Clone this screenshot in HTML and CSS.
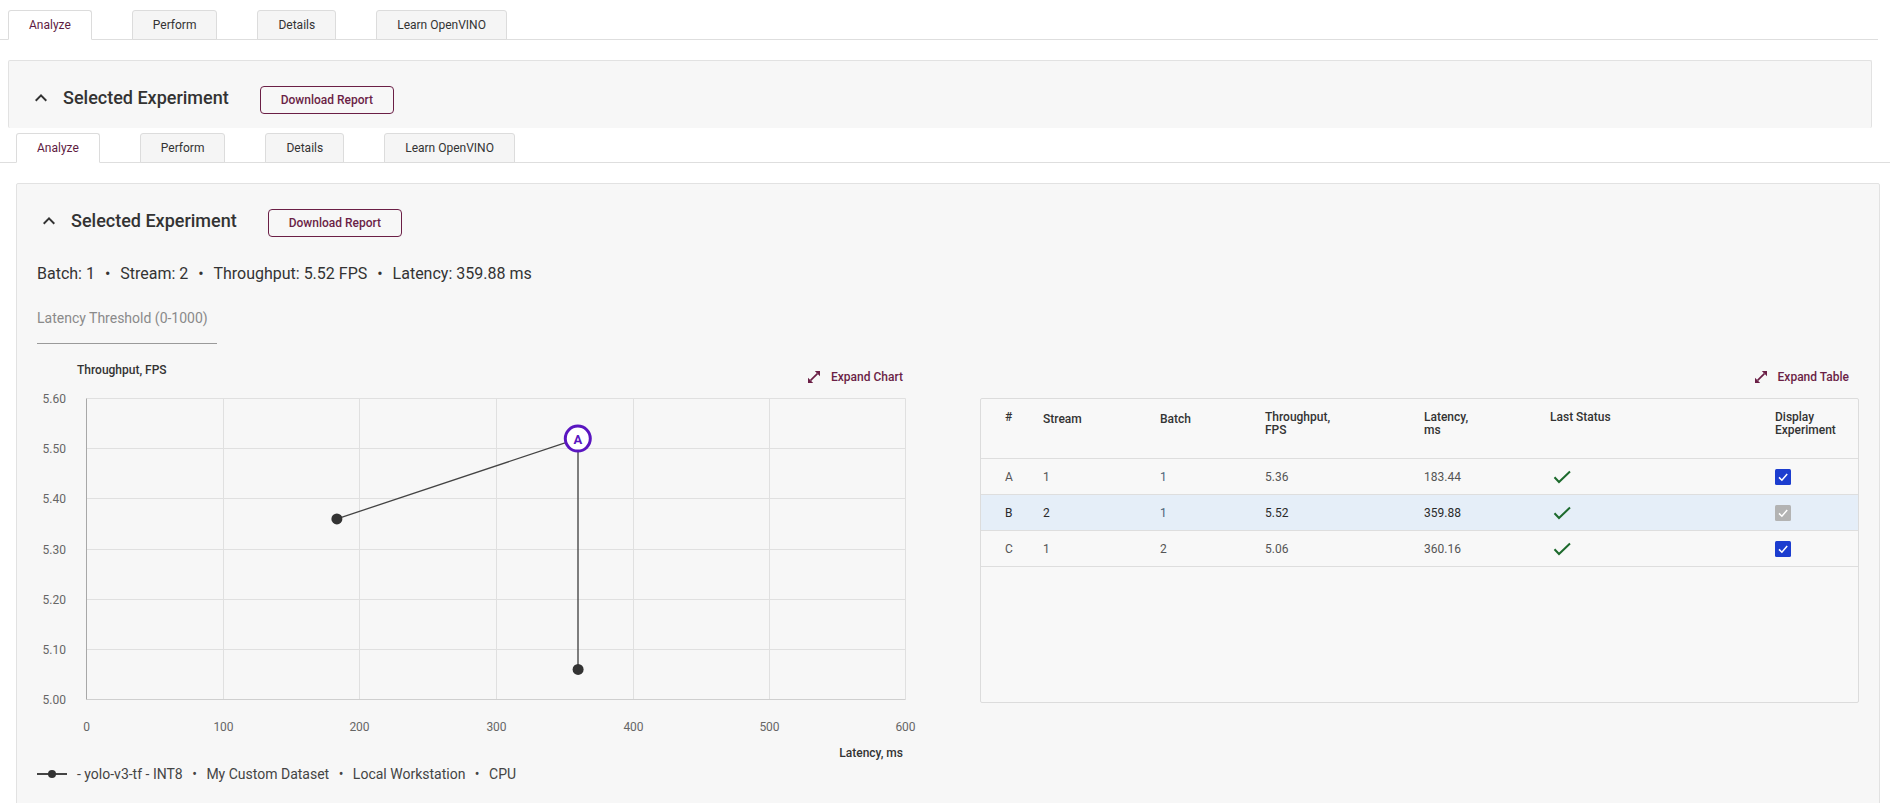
FILE: index.html
```html
<!DOCTYPE html>
<html lang="en">
<head>
<meta charset="utf-8">
<title>Analyze</title>
<link rel="stylesheet" href="styles.css">
</head>
<body>
<div class="view view-ghost">
  <div class="tabs">
    <div class="tab tab-active">Analyze</div>
    <div class="tab">Perform</div>
    <div class="tab">Details</div>
    <div class="tab">Learn OpenVINO</div>
  </div>
  <div class="card card-clipped">
    <div class="card-head">
      <div class="head-title">
        <svg class="chevron" width="24" height="24" viewBox="0 0 24 24"><path d="M7.41 15.41L12 10.83l4.59 4.58L18 14l-6-6-6 6z" fill="#333"/></svg>
        <span class="title">Selected Experiment</span>
      </div>
      <button class="btn-outline">Download Report</button>
    </div>
  </div>
</div>

<div class="view view-main">
  <div class="tabs">
    <div class="tab tab-active">Analyze</div>
    <div class="tab">Perform</div>
    <div class="tab">Details</div>
    <div class="tab">Learn OpenVINO</div>
  </div>
  <div class="card">
    <div class="card-head">
      <div class="head-title">
        <svg class="chevron" width="24" height="24" viewBox="0 0 24 24"><path d="M7.41 15.41L12 10.83l4.59 4.58L18 14l-6-6-6 6z" fill="#333"/></svg>
        <span class="title">Selected Experiment</span>
      </div>
      <button class="btn-outline">Download Report</button>
    </div>

    <div class="summary">Batch: 1 <span class="sep">•</span> Stream: 2 <span class="sep">•</span> Throughput: 5.52 FPS <span class="sep">•</span> Latency: 359.88 ms</div>

    <div class="field"><span class="field-label">Latency Threshold (0-1000)</span></div>

    <div class="panels">
      <div class="chart-col">
        <div class="col-head">
          <span class="axis-title">Throughput, FPS</span>
          <button class="expand expand-chart">
            <svg width="12" height="12" viewBox="0 0 12 12"><path d="M2.6 9.4L9.4 2.6" stroke="currentColor" stroke-width="1.7"/><path d="M12 0V5.2L6.8 0Z M0 12V6.8L5.2 12Z" fill="currentColor"/></svg>
            <span>Expand Chart</span>
          </button>
        </div>
        <svg class="plot" width="869" height="380" viewBox="0 0 869 380">
          <g stroke="#e0e0e0" stroke-width="1">
            <line x1="49.5" y1="13.5" x2="868.5" y2="13.5"/>
            <line x1="49.5" y1="63.5" x2="868.5" y2="63.5"/>
            <line x1="49.5" y1="113.5" x2="868.5" y2="113.5"/>
            <line x1="49.5" y1="164.5" x2="868.5" y2="164.5"/>
            <line x1="49.5" y1="214.5" x2="868.5" y2="214.5"/>
            <line x1="49.5" y1="264.5" x2="868.5" y2="264.5"/>
            <line x1="186.5" y1="13.5" x2="186.5" y2="314.5"/>
            <line x1="322.5" y1="13.5" x2="322.5" y2="314.5"/>
            <line x1="459.5" y1="13.5" x2="459.5" y2="314.5"/>
            <line x1="596.5" y1="13.5" x2="596.5" y2="314.5"/>
            <line x1="732.5" y1="13.5" x2="732.5" y2="314.5"/>
            <line x1="868.5" y1="13.5" x2="868.5" y2="314.5"/>
          </g>
          <line x1="49.5" y1="314.5" x2="868.5" y2="314.5" stroke="#cfcfcf"/>
          <line x1="49.5" y1="13.5" x2="49.5" y2="314.5" stroke="#a8a8a8"/>
          <g class="tick-y" text-anchor="end">
            <text x="29" y="13.5">5.60</text>
            <text x="29" y="63.5">5.50</text>
            <text x="29" y="113.5">5.40</text>
            <text x="29" y="164.5">5.30</text>
            <text x="29" y="214.5">5.20</text>
            <text x="29" y="264.5">5.10</text>
            <text x="29" y="314.5">5.00</text>
          </g>
          <g class="tick-x" text-anchor="middle">
            <text x="49.5" y="342">0</text>
            <text x="186.5" y="342">100</text>
            <text x="322.5" y="342">200</text>
            <text x="459.5" y="342">300</text>
            <text x="596.5" y="342">400</text>
            <text x="732.5" y="342">500</text>
            <text x="868.5" y="342">600</text>
          </g>
          <text class="x-title" x="866" y="368" text-anchor="end">Latency, ms</text>
          <line x1="299.9" y1="133.9" x2="540.8" y2="53.6" stroke="#444" stroke-width="1.3"/>
          <line x1="541" y1="53.6" x2="541" y2="284.4" stroke="#555" stroke-width="1.5"/>
          <circle cx="299.9" cy="133.9" r="5.5" fill="#333"/>
          <circle cx="541.1" cy="284.4" r="5.5" fill="#333"/>
          <circle cx="540.8" cy="53.6" r="12.5" fill="#fff" stroke="#5a16c0" stroke-width="3"/>
          <text class="marker-label" x="540.8" y="54.2" text-anchor="middle">A</text>
        </svg>
        <div class="legend">
          <svg width="30" height="10" viewBox="0 0 30 10"><line x1="0" y1="5" x2="30" y2="5" stroke="#444" stroke-width="2"/><circle cx="15" cy="5" r="4" fill="#333"/></svg>
          <span class="legend-text">- yolo-v3-tf - INT8 <span class="sep-sm">•</span> My Custom Dataset <span class="sep-sm">•</span> Local Workstation <span class="sep-sm">•</span> CPU</span>
        </div>
      </div>

      <div class="table-col">
        <div class="col-head col-head-right">
          <button class="expand expand-table">
            <svg width="12" height="12" viewBox="0 0 12 12"><path d="M2.6 9.4L9.4 2.6" stroke="currentColor" stroke-width="1.7"/><path d="M12 0V5.2L6.8 0Z M0 12V6.8L5.2 12Z" fill="currentColor"/></svg>
            <span>Expand Table</span>
          </button>
        </div>
        <div class="exp-table">
          <div class="row row-head">
            <div>#</div>
            <div class="h-sort">Stream</div>
            <div class="h-sort">Batch</div>
            <div>Throughput,<br>FPS</div>
            <div>Latency,<br>ms</div>
            <div>Last Status</div>
            <div>Display<br>Experiment</div>
          </div>
          <div class="row">
            <div>A</div><div>1</div><div class="c-batch">1</div><div>5.36</div><div>183.44</div>
            <div><svg class="ok" width="18" height="14" viewBox="0 0 18 14"><polyline points="1.5,7.2 6,12 17,1.5" fill="none" stroke="#1d6a2d" stroke-width="2"/></svg></div>
            <div><svg width="16" height="16" viewBox="0 0 16 16"><rect width="16" height="16" rx="1.5" fill="#1c3dcf"/><polyline points="4,8.4 6.9,11.2 12.2,5" fill="none" stroke="#fff" stroke-width="1.5"/></svg></div>
          </div>
          <div class="row row-selected">
            <div>B</div><div>2</div><div class="c-batch">1</div><div>5.52</div><div>359.88</div>
            <div><svg class="ok" width="18" height="14" viewBox="0 0 18 14"><polyline points="1.5,7.2 6,12 17,1.5" fill="none" stroke="#1d6a2d" stroke-width="2"/></svg></div>
            <div><svg width="16" height="16" viewBox="0 0 16 16"><rect width="16" height="16" rx="1.5" fill="#b3b3b3"/><polyline points="4,8.4 6.9,11.2 12.2,5" fill="none" stroke="#fff" stroke-width="1.5"/></svg></div>
          </div>
          <div class="row">
            <div>C</div><div>1</div><div>2</div><div>5.06</div><div>360.16</div>
            <div><svg class="ok" width="18" height="14" viewBox="0 0 18 14"><polyline points="1.5,7.2 6,12 17,1.5" fill="none" stroke="#1d6a2d" stroke-width="2"/></svg></div>
            <div><svg width="16" height="16" viewBox="0 0 16 16"><rect width="16" height="16" rx="1.5" fill="#1c3dcf"/><polyline points="4,8.4 6.9,11.2 12.2,5" fill="none" stroke="#fff" stroke-width="1.5"/></svg></div>
          </div>
        </div>
      </div>
    </div>
  </div>
</div>
</body>
</html>
```

FILE: styles.css
```css
* { box-sizing: border-box; }

html, body {
  margin: 0;
  padding: 0;
  background: #fff;
  font-family: Roboto, "Liberation Sans", Arial, sans-serif;
  color: #333;
}

body { overflow: hidden; }

/* ---------- tabs ---------- */
.tabs {
  display: flex;
  align-items: flex-end;
  gap: 40px;
  border-bottom: 1px solid #dedede;
}

.view-ghost .tabs {
  height: 40px;
  padding: 10px 0 0 8px;
  margin-right: 12px;
}

.view-main { margin-top: 5px; }

.view-main .tabs {
  height: 30px;
  padding-left: 16px;
}

.tab {
  height: 30px;
  margin-bottom: -1px;
  padding: 0 20px;
  border: 1px solid #dcdcdc;
  border-radius: 3px 3px 0 0;
  background: #f5f5f5;
  font-size: 12px;
  line-height: 28px;
  color: #333;
  white-space: nowrap;
}

.tab-active {
  background: #fff;
  border-bottom-color: #fff;
  color: #5e1b3f;
}

/* ---------- card ---------- */
.card {
  margin: 20px 10px 0 16px;
  padding: 25px 20px 40px 20px;
  background: #f7f7f7;
  border: 1px solid #e2e2e2;
  border-radius: 2px;
}

.card-clipped {
  margin: 20px 18px 0 8px;
  height: 68px;
  overflow: hidden;
  border-bottom: none;
}

.card-head {
  display: flex;
  align-items: flex-start;
}

.head-title {
  display: flex;
  align-items: center;
  height: 24px;
}

.chevron { display: block; }

.title {
  margin-left: 10px;
  font-size: 18px;
  line-height: 24px;
  font-weight: 500;
  color: #333;
  white-space: nowrap;
}

.btn-outline {
  margin-left: 31px;
  height: 28px;
  padding: 0 20px;
  background: transparent;
  border: 1px solid #6b1f46;
  border-radius: 4px;
  color: #6b1f46;
  font-family: inherit;
  font-size: 12px;
  font-weight: 500;
  white-space: nowrap;
}

.summary {
  margin-top: 27px;
  font-size: 16px;
  line-height: 20px;
  color: #333;
  white-space: nowrap;
}

.sep { margin: 0 6px; }

.field {
  margin-top: 25px;
  width: 180px;
  padding-bottom: 16px;
  border-bottom: 1px solid #9a9a9a;
}

.field-label {
  display: block;
  font-size: 14px;
  line-height: 18px;
  color: #8a8a8a;
  white-space: nowrap;
}

/* ---------- panels ---------- */
.panels {
  margin-top: 18px;
  display: grid;
  grid-template-columns: 869px 1fr;
  column-gap: 74px;
}

.col-head {
  display: flex;
  justify-content: space-between;
  height: 23px;
}

.col-head-right { justify-content: flex-end; }

.axis-title {
  align-self: flex-start;
  margin-left: 40px;
  font-size: 12px;
  line-height: 16px;
  font-weight: 500;
  color: #333;
}

.expand {
  align-self: flex-end;
  display: flex;
  align-items: center;
  gap: 11px;
  height: 16px;
  padding: 0;
  background: none;
  border: none;
  color: #6b1f46;
  font-family: inherit;
  font-size: 12px;
  line-height: 16px;
  font-weight: 500;
  white-space: nowrap;
}

.expand svg { display: block; }

.expand-chart { margin-right: 3px; }
.expand-table { margin-right: 10px; }

.plot {
  display: block;
  overflow: visible;
  font-family: Roboto, "Liberation Sans", Arial, sans-serif;
}

.tick-y text, .tick-x text {
  font-size: 12px;
  fill: #666;
  dominant-baseline: central;
}

.x-title {
  font-size: 12px;
  font-weight: 500;
  fill: #333;
  dominant-baseline: central;
}

.marker-label {
  font-size: 13px;
  font-weight: 700;
  fill: #5a16c0;
  dominant-baseline: central;
}

.legend {
  display: flex;
  align-items: center;
  height: 18px;
}

.legend svg { display: block; }

.legend-text {
  margin-left: 10px;
  font-size: 14px;
  line-height: 18px;
  color: #444;
  white-space: nowrap;
}

.sep-sm { margin: 0 6px; }

/* ---------- table ---------- */
.exp-table {
  margin-top: 13px;
  height: 305px;
  border: 1px solid #dcdcdc;
  border-radius: 2px;
  background: #f8f8f8;
}

.row {
  display: grid;
  grid-template-columns: 38px 117px 105px 159px 126px 225px 1fr;
  align-items: center;
  height: 36px;
  padding-left: 24px;
  border-bottom: 1px solid #dedede;
  font-size: 12px;
  color: #555;
}

.row svg { display: block; }
.row .ok { margin-left: 3px; }

.row-head {
  align-items: start;
  height: 60px;
  padding-top: 12px;
  line-height: 13px;
  font-weight: 500;
  color: #333;
}

.row-head .h-sort { padding-top: 2px; }

.row-selected {
  background: #e5eef8;
  color: #2a2a2a;
}

.c-batch { color: #4e6478; }
```
